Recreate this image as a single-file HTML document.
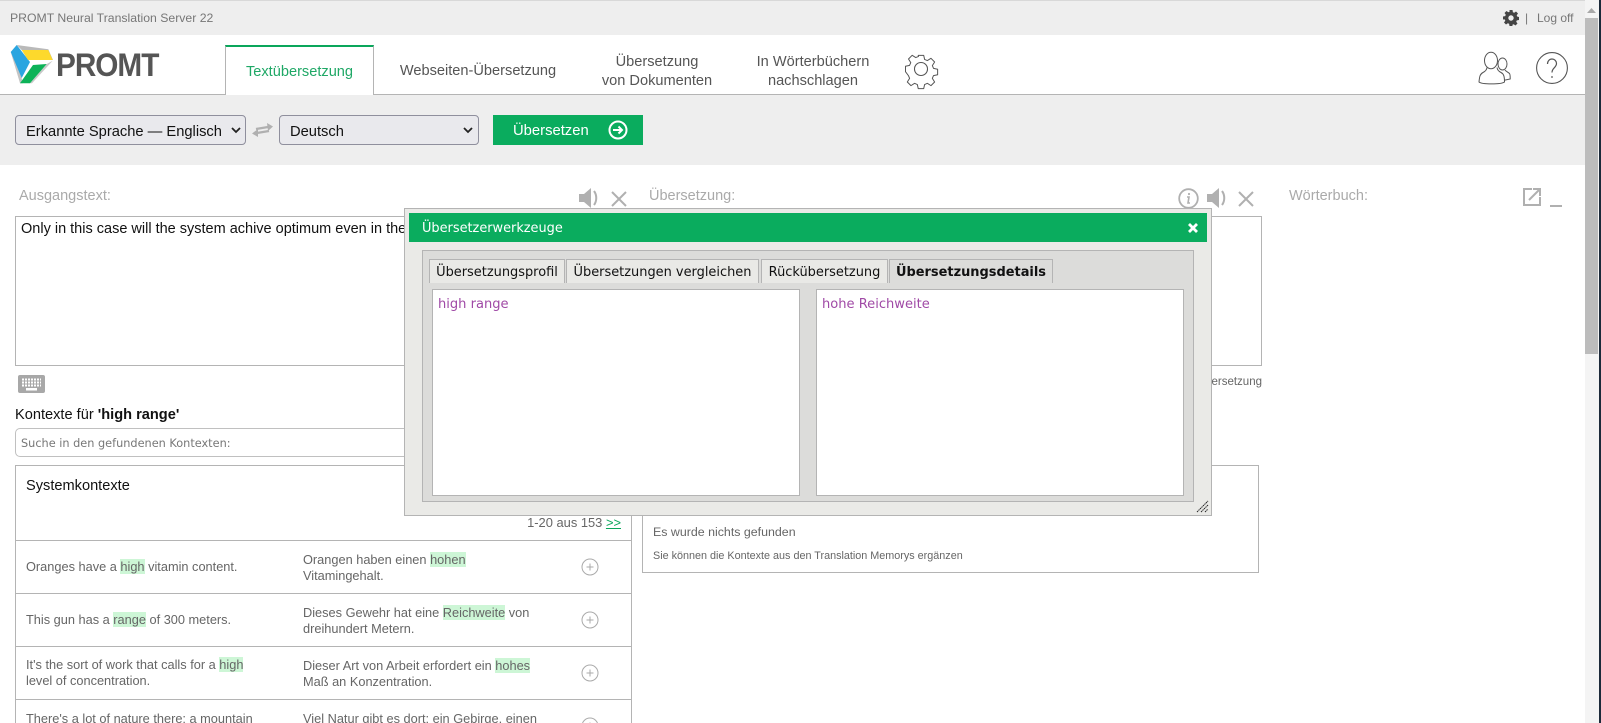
<!DOCTYPE html>
<html><head><meta charset="utf-8"><title>PROMT</title>
<style>
html,body{margin:0;padding:0;width:1601px;height:723px;overflow:hidden;background:#fff;font-family:"Liberation Sans",Arial,sans-serif;color:#000}
#w{position:relative;width:1601px;height:723px;overflow:hidden}
.a{position:absolute;white-space:nowrap}
.b{position:absolute;box-sizing:border-box;background:#fff;border:1px solid #b4b4b4}
.nav{position:absolute;font-size:14.6px;line-height:19px;color:#555;text-align:center;white-space:nowrap}
.sel{position:absolute;box-sizing:border-box;background:#e9e9ed;border:1px solid #8f8f9d;border-radius:4px;height:30px;top:115px;font-size:14.7px;line-height:32px;padding-left:10px;color:#111}
.t{position:absolute;font-size:12.78px;line-height:16px;color:#666;white-space:nowrap}
.t mark{background:#cdf6d6;color:#666}
.line{position:absolute;left:15px;width:617px;height:1px;background:#b4b4b4}
.lbl{position:absolute;font-size:14.5px;color:#aaa;white-space:nowrap}
.tab{position:absolute;box-sizing:border-box;top:259px;height:24px;background:#e9e9e6;border:1px solid #b4b4b4;border-bottom:0;font-family:"DejaVu Sans",Verdana,sans-serif;font-size:12.95px;line-height:25px;text-align:center;color:#111;white-space:nowrap}
.pp{font-family:"DejaVu Sans",Verdana,sans-serif;font-size:13.05px;color:#a04aa6;position:absolute;white-space:nowrap}
svg{position:absolute;overflow:visible}
</style></head><body><div id="w">
<!-- top bar -->
<div style="position:absolute;left:0;top:0;width:1585px;height:35px;background:#eee;border-top:1px solid #d8d8d8;box-sizing:border-box"></div>
<div class="a" style="left:10px;top:11px;font-size:12.25px;color:#777">PROMT Neural Translation Server 22</div>
<svg style="left:1503px;top:10px" width="16" height="16" viewBox="0 0 16 16"><path fill="#444" fill-rule="evenodd" d="M6.5 0h3l.4 2.2 1.3.6L13 1.500l2 2-1.300 1.800.6 1.300L16 7v3l-2.200.4-.6 1.300 1.300 1.800-2 2-1.800-1.300-1.300.6L9.500 16h-3l-.4-2.200-1.300-.6L3 14.500l-2-2 1.300-1.800-.6-1.300L0 9.500v-3l2.200-.4.6-1.300L1.500 3l2-2 1.800 1.300 1.300-.6zM8 5.300a2.700 2.700 0 1 0 0 5.400 2.700 2.700 0 0 0 0-5.400z"/></svg>
<div class="a" style="left:1525px;top:11px;font-size:12px;color:#777">|</div>
<div class="a" style="left:1537px;top:11px;font-size:12px;color:#777">Log off</div>
<!-- header -->
<div style="position:absolute;left:0;top:94px;width:1585px;height:1px;background:#b4b4b4"></div>
<svg style="left:10px;top:45px" width="44" height="39" viewBox="0 0 44 39">
<polygon points="6.700,0 38.300,4.300 43,15 36,15 11.700,5" fill="#b9b9b9"/>
<polygon points="1,8 10,38.300 13,38.300 8,20" fill="#c4c4c4"/>
<polygon points="36.700,19 42.700,15.700 22,38.300 20,38.300" fill="#c9c9c9"/>
<polygon points="0.700,7 6.700,0 20,17 11.700,33" fill="#2aa5e0"/>
<polygon points="11.700,5 38.300,5 42.700,15 18,15" fill="#fdd92c"/>
<polygon points="23,20 36.700,19 20,38.300 10,38.300" fill="#0db258"/>
</svg>
<div class="a" style="left:56px;top:47px;font-size:32px;line-height:37px;font-weight:bold;color:#555;letter-spacing:-1.1px;transform:scaleX(.93);transform-origin:0 0">PROMT</div>
<div style="position:absolute;box-sizing:border-box;left:225px;top:45px;width:149px;height:50px;background:#fff;border:1px solid #b4b4b4;border-top:2px solid #0aa65b;border-bottom:0"></div>
<div class="nav" style="left:225px;top:63px;width:149px;color:#1fa866">Textübersetzung</div>
<div class="nav" style="left:399px;top:62px;width:158px">Webseiten-Übersetzung</div>
<div class="nav" style="left:586px;top:53px;width:142px">Übersetzung<br>von Dokumenten</div>
<div class="nav" style="left:742px;top:53px;width:142px">In Wörterbüchern<br>nachschlagen</div>
<svg style="left:904px;top:52px" width="34" height="34" viewBox="0 0 34 34" fill="none" stroke="#555" stroke-width="1.100"><circle cx="17" cy="17" r="6.500"/><path d="M14 2h6l1 4.500 3 1.300 4-2.500 4 4-2.500 4 1.300 3 4.500 1v6l-4.500 1-1.300 3 2.500 4-4 4-4-2.500-3 1.300-1 4.500h-6l-1-4.500-3-1.300-4 2.500-4-4 2.500-4-1.300-3L0 20v-6l4.500-1 1.300-3-2.500-4 4-4 4 2.500 3-1.300z" stroke-linejoin="round" transform="translate(1.500 1.500) scale(.91)"/></svg>
<svg style="left:1478px;top:52px" width="35" height="33" viewBox="0 0 35 33" fill="none" stroke="#555" stroke-width="1"><ellipse cx="24.500" cy="12" rx="4.500" ry="6"/><path d="M27 18c1 1.500 3 2 4.500 3.500.8 1 .7 3.500.7 5.500l-6 1.300"/><path d="M9 15.500c-.5 3-2 4-4 5-3 1.500-3.500 4-4 9.500 3 2.500 22 2.500 25.500 0 0-5-.5-8-3.500-9.500-2-1-3.500-2-4-5" fill="#fff"/><ellipse cx="13" cy="8.500" rx="6.500" ry="8.300" fill="#fff"/></svg>
<svg style="left:1536px;top:52px" width="32" height="32" viewBox="0 0 32 32" fill="none" stroke="#555" stroke-width="1.100"><circle cx="16" cy="16" r="15.400"/><path d="M11.500 12c0-3 2-5 4.500-5s4.500 2 4.500 4.500c0 4-4.500 4.500-4.500 9" stroke-width="1.200"/><circle cx="16" cy="25" r=".9" fill="#555" stroke="none"/></svg>
<!-- toolbar -->
<div style="position:absolute;left:0;top:95px;width:1585px;height:70px;background:#eee"></div>
<div class="sel" style="left:15px;width:231px">Erkannte Sprache — Englisch</div>
<svg style="left:231px;top:127px" width="10" height="7" viewBox="0 0 10 7" fill="none" stroke="#222" stroke-width="1.800"><path d="M1 1l4 4 4-4"/></svg>
<svg style="left:252px;top:123px" width="21" height="14" viewBox="0 0 21 14" fill="#b0b0b0"><path d="M4 6l12-2" stroke="#b0b0b0" stroke-width="2.400"/><polygon points="15,0 21,3.500 16,8"/><path d="M17 8L5 10" stroke="#b0b0b0" stroke-width="2.400"/><polygon points="6,6 0,10.500 6,14"/></svg>
<div class="sel" style="left:279px;width:200px">Deutsch</div>
<svg style="left:463px;top:127px" width="10" height="7" viewBox="0 0 10 7" fill="none" stroke="#222" stroke-width="1.800"><path d="M1 1l4 4 4-4"/></svg>
<div style="position:absolute;left:493px;top:115px;width:150px;height:30px;background:#0aac5e"></div>
<div class="a" style="left:513px;top:122px;font-size:14.8px;line-height:18px;color:#fff">Übersetzen</div>
<svg style="left:608px;top:120px" width="20" height="20" viewBox="0 0 20 20" fill="none" stroke="#fff" stroke-width="2"><circle cx="10" cy="10" r="8.500"/><path d="M5 10h9M10.500 6.500L14 10l-3.500 3.500"/></svg>
<!-- labels -->
<div class="lbl" style="left:19px;top:188px">Ausgangstext:</div>
<div class="lbl" style="left:649px;top:188px">Übersetzung:</div>
<div class="lbl" style="left:1289px;top:188px">Wörterbuch:</div>
<svg style="left:579px;top:188px" width="21" height="20" viewBox="0 0 21 20" fill="#b0b0b0"><path d="M0 6h5l7-6v20l-7-6H0z"/><path d="M15 3c3 4 3 10 0 14" fill="none" stroke="#b0b0b0" stroke-width="2"/></svg>
<svg style="left:611px;top:191px" width="16" height="16" viewBox="0 0 16 16" stroke="#b0b0b0" stroke-width="2"><path d="M1 1l14 14M15 1L1 15"/></svg>
<svg style="left:1178px;top:188px" width="21" height="21" viewBox="0 0 21 21" fill="none" stroke="#b0b0b0" stroke-width="1.800"><circle cx="10.500" cy="10.500" r="9.300"/><path d="M9 9h2l-1 6h2" stroke-width="1.600"/><circle cx="11" cy="6" r="1.100" fill="#b0b0b0" stroke="none"/></svg>
<svg style="left:1207px;top:188px" width="21" height="20" viewBox="0 0 21 20" fill="#b0b0b0"><path d="M0 6h5l7-6v20l-7-6H0z"/><path d="M15 3c3 4 3 10 0 14" fill="none" stroke="#b0b0b0" stroke-width="2"/></svg>
<svg style="left:1238px;top:191px" width="16" height="16" viewBox="0 0 16 16" stroke="#b0b0b0" stroke-width="2"><path d="M1 1l14 14M15 1L1 15"/></svg>
<svg style="left:1523px;top:188px" width="18" height="18" viewBox="0 0 18 18" fill="none" stroke="#b0b0b0" stroke-width="2"><path d="M9 1H1v16h16V9"/><path d="M6 12L16 2M10 1h7v7"/></svg>
<div style="position:absolute;left:1550px;top:205px;width:12px;height:2px;background:#b0b0b0"></div>
<!-- text areas -->
<div class="b" style="left:15px;top:216px;width:618px;height:150px"></div>
<div class="a" style="left:21px;top:220px;font-size:14.5px;line-height:18px;color:#111">Only in this case will the system achive optimum even in the</div>
<div class="b" style="left:643px;top:216px;width:619px;height:150px"></div>
<div class="a" style="right:339px;top:376px;font-size:11.5px;color:#666">Übersetzung</div>
<svg style="left:18px;top:375px" width="27" height="18" viewBox="0 0 27 18"><rect width="27" height="18" rx="2" fill="#a8a8a8"/><path d="M4 4.500h19M4 7.500h19M4 10.500h19" stroke="#fff" stroke-width="2" stroke-dasharray="2 1"/><rect x="8" y="13" width="11" height="2.500" fill="#fff"/></svg>
<div class="a" style="left:15px;top:406px;font-size:14.6px;line-height:19px;color:#111">Kontexte für <b>'high range'</b></div>
<div style="position:absolute;box-sizing:border-box;left:15px;top:428px;width:618px;height:29px;border:1px solid #c0c0c0;border-radius:5px;background:#fff"></div>
<div class="a" style="left:21px;top:437px;font-family:'DejaVu Sans',sans-serif;font-size:11.3px;line-height:14px;color:#777">Suche in den gefundenen Kontexten:</div>
<!-- left contexts -->
<div style="position:absolute;box-sizing:border-box;left:15px;top:465px;width:617px;height:270px;border:1px solid #b4b4b4;background:#fff"></div>
<div class="a" style="left:26px;top:477px;font-size:14.6px;line-height:18px;color:#111">Systemkontexte</div>
<div class="a" style="right:980px;top:515px;font-size:12.9px;line-height:16px;color:#666">1-20 aus 153 <span style="color:#0aa65b;text-decoration:underline">&gt;&gt;</span></div>
<div class="line" style="top:540px"></div>
<div class="line" style="top:593px"></div>
<div class="line" style="top:646px"></div>
<div class="line" style="top:699px"></div>
<div class="t" style="left:26px;top:559px">Oranges have a <mark>high</mark> vitamin content.</div>
<div class="t" style="left:303px;top:552px">Orangen haben einen <mark>hohen</mark><br>Vitamingehalt.</div>
<div class="t" style="left:26px;top:612px">This gun has a <mark>range</mark> of 300 meters.</div>
<div class="t" style="left:303px;top:605px">Dieses Gewehr hat eine <mark>Reichweite</mark> von<br>dreihundert Metern.</div>
<div class="t" style="left:26px;top:657px">It's the sort of work that calls for a <mark>high</mark><br>level of concentration.</div>
<div class="t" style="left:303px;top:658px">Dieser Art von Arbeit erfordert ein <mark>hohes</mark><br>Maß an Konzentration.</div>
<div class="t" style="left:26px;top:711px">There's a lot of nature there: a mountain</div>
<div class="t" style="left:303px;top:711px">Viel Natur gibt es dort: ein Gebirge, einen</div>
<svg style="left:581px;top:558px" width="18" height="18" viewBox="0 0 18 18" fill="none" stroke="#aaa"><circle cx="9" cy="9" r="8"/><path d="M9 5.500v7M5.500 9h7"/></svg>
<svg style="left:581px;top:611px" width="18" height="18" viewBox="0 0 18 18" fill="none" stroke="#aaa"><circle cx="9" cy="9" r="8"/><path d="M9 5.500v7M5.500 9h7"/></svg>
<svg style="left:581px;top:664px" width="18" height="18" viewBox="0 0 18 18" fill="none" stroke="#aaa"><circle cx="9" cy="9" r="8"/><path d="M9 5.500v7M5.500 9h7"/></svg>
<svg style="left:581px;top:717px" width="18" height="18" viewBox="0 0 18 18" fill="none" stroke="#aaa"><circle cx="9" cy="9" r="8"/><path d="M9 5.500v7M5.500 9h7"/></svg>
<!-- right contexts -->
<div class="b" style="left:642px;top:465px;width:617px;height:108px"></div>
<div class="a" style="left:653px;top:524px;font-size:12.4px;line-height:16px;color:#666">Es wurde nichts gefunden</div>
<div class="a" style="left:653px;top:549px;font-size:10.8px;line-height:14px;color:#666">Sie können die Kontexte aus den Translation Memorys ergänzen</div>
<!-- modal -->
<div style="position:absolute;box-sizing:border-box;left:404px;top:208px;width:808px;height:308px;background:#eaeae7;border:1px solid #b4b4b4"></div>
<div style="position:absolute;left:409px;top:213px;width:798px;height:29px;background:#0aac5e"></div>
<div class="a" style="left:422px;top:220px;font-family:'DejaVu Sans',sans-serif;font-size:12.9px;line-height:17px;color:#fff">Übersetzerwerkzeuge</div>
<svg style="left:1188px;top:223px" width="10" height="10" viewBox="0 0 10 10" stroke="#fff" stroke-width="2.800"><path d="M1 1l8 8M9 1L1 9"/></svg>
<div style="position:absolute;box-sizing:border-box;left:422px;top:250px;width:772px;height:252px;background:#dcdcda;border:1px solid #b4b4b4"></div>
<div class="tab" style="left:429px;width:136px">Übersetzungsprofil</div>
<div class="tab" style="left:566px;width:193px">Übersetzungen vergleichen</div>
<div class="tab" style="left:761px;width:127px">Rückübersetzung</div>
<div class="tab" style="left:889px;width:164px;background:#dcdcda;font-weight:bold">Übersetzungsdetails</div>
<div class="b" style="left:432px;top:289px;width:368px;height:207px"></div>
<div class="b" style="left:816px;top:289px;width:368px;height:207px"></div>
<div class="pp" style="left:438px;top:297px">high range</div>
<div class="pp" style="left:822px;top:297px">hohe Reichweite</div>
<svg style="left:1197px;top:500px" width="12" height="13" viewBox="0 0 12 13" stroke="#222" stroke-width="1" stroke-dasharray="1.500 .6"><path d="M0 12L11 1M4 12l7-7M8 12l3-3"/></svg>
<!-- scrollbar -->
<div style="position:absolute;left:1585px;top:0;width:16px;height:723px;background:#f4f4f4"></div>
<div style="position:absolute;left:1585px;top:18px;width:13px;height:336px;background:#bcbcbc"></div>
<svg style="left:1587px;top:8px" width="9" height="5" viewBox="0 0 9 5"><path d="M0 5L4.500 0 9 5z" fill="#a8a8a8"/></svg>
<div style="position:absolute;left:1599px;top:0;width:2px;height:723px;background:#1c2a3a"></div>
</div></body></html>
